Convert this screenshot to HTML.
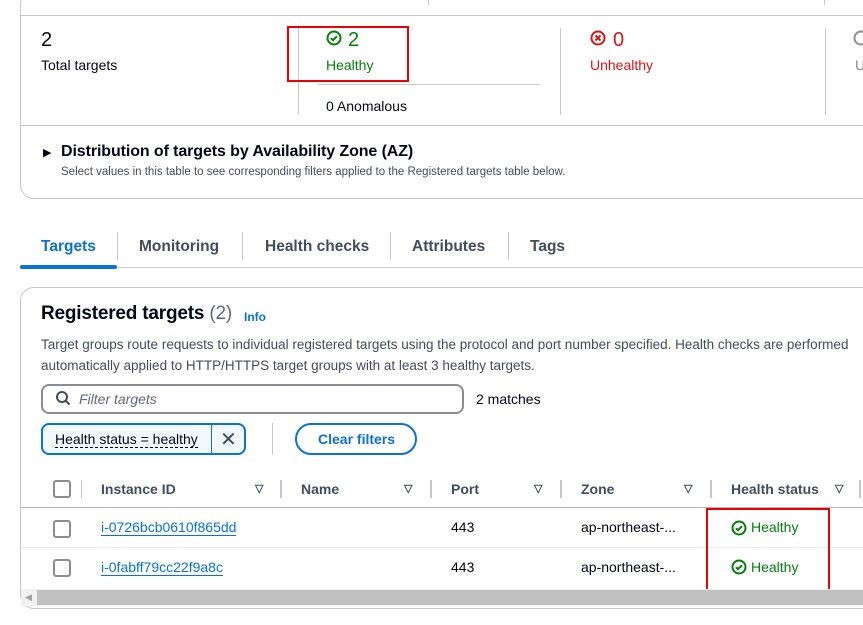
<!DOCTYPE html><html><head><style>
body{margin:0;width:863px;height:625px;overflow:hidden;background:#fff;font-family:"Liberation Sans",sans-serif;color:#000716;position:relative}
.a{position:absolute;white-space:nowrap}
.vl{position:absolute;width:1px;background:#c6c6cd}
.hl{position:absolute;height:1px;background:#c6c6cd}
.g{color:#037f0c}.r{color:#d91515}.b{color:#0972d3}
.cb{position:absolute;width:14px;height:14px;border:2px solid #8c8c94;border-radius:3px;left:53px}
.tri{position:absolute;font-size:11px;color:#414d5c;font-weight:bold}
</style></head><body>
<div style="position:absolute;left:20px;top:-10px;width:860px;height:207px;border:1px solid #c6c6cd;border-radius:14px"></div>
<div class="hl" style="left:20px;top:15px;width:843px"></div>
<div class="vl" style="left:428px;top:0;height:5px"></div>
<div class="vl" style="left:824px;top:0;height:5px"></div>
<div class="a" style="left:41px;top:29px;font-size:20px">2</div>
<div class="a" style="left:41px;top:57px;font-size:14px">Total targets</div>
<div class="vl" style="left:298px;top:28px;height:87px"></div>
<svg class="a" style="left:326px;top:30px" width="16" height="16" viewBox="0 0 16 16"><circle cx="8" cy="8" r="6.5" fill="none" stroke="#037f0c" stroke-width="2"/><path d="M5 8.2l2 2 4-4" fill="none" stroke="#037f0c" stroke-width="2"/></svg>
<div class="a g" style="left:348px;top:29px;font-size:20px">2</div>
<div class="a g" style="left:326px;top:57px;font-size:14px">Healthy</div>
<div class="hl" style="left:318px;top:84px;width:222px"></div>
<div class="a" style="left:326px;top:98px;font-size:14px">0 Anomalous</div>
<div class="vl" style="left:560px;top:28px;height:87px"></div>
<svg class="a" style="left:590px;top:30px" width="16" height="16" viewBox="0 0 16 16"><circle cx="8" cy="8" r="6.5" fill="none" stroke="#d91515" stroke-width="2"/><path d="M5.5 5.5l5 5M10.5 5.5l-5 5" stroke="#d91515" stroke-width="2"/></svg>
<div class="a r" style="left:613px;top:29px;font-size:20px">0</div>
<div class="a r" style="left:590px;top:57px;font-size:14px">Unhealthy</div>
<div class="vl" style="left:825px;top:28px;height:87px"></div>
<svg class="a" style="left:853px;top:30px" width="16" height="16"><circle cx="8" cy="8" r="6.5" fill="none" stroke="#8c8c94" stroke-width="2"/></svg>
<div class="a" style="left:855px;top:57px;font-size:14px;color:#8c8c94">U</div>
<div style="position:absolute;left:287px;top:26px;width:118px;height:52px;border:2px solid #e00"></div>
<div class="hl" style="left:20px;top:125px;width:843px"></div>
<div class="a" style="left:43px;top:146px;font-size:11px">&#9654;</div>
<div class="a" style="left:61px;top:143px;font-size:16px;font-weight:bold;letter-spacing:-0.1px">Distribution of targets by Availability Zone (AZ)</div>
<div class="a" style="left:61px;top:166px;font-size:11.5px;color:#414d5c">Select values in this table to see corresponding filters applied to the Registered targets table below.</div>
<div class="a b" style="left:41px;top:238px;font-size:15.5px;font-weight:bold">Targets</div>
<div class="a" style="left:139px;top:238px;font-size:15.5px;font-weight:bold;color:#414d5c">Monitoring</div>
<div class="a" style="left:265px;top:238px;font-size:15.5px;font-weight:bold;color:#414d5c">Health checks</div>
<div class="a" style="left:412px;top:238px;font-size:15.5px;font-weight:bold;color:#414d5c">Attributes</div>
<div class="a" style="left:530px;top:238px;font-size:15.5px;font-weight:bold;color:#414d5c">Tags</div>
<div class="vl" style="left:117px;top:232px;height:28px"></div>
<div class="vl" style="left:242px;top:232px;height:28px"></div>
<div class="vl" style="left:390px;top:232px;height:28px"></div>
<div class="vl" style="left:508px;top:232px;height:28px"></div>
<div class="hl" style="left:20px;top:267px;width:843px"></div>
<div style="position:absolute;left:20px;top:265px;width:97px;height:4px;background:#0972d3;border-radius:2px"></div>
<div style="position:absolute;left:20px;top:287px;width:860px;height:320px;border:1px solid #c6c6cd;border-radius:14px;overflow:hidden"></div>
<div class="a" style="left:41px;top:303px;font-size:19px;font-weight:bold;letter-spacing:-0.2px">Registered targets <span style="font-weight:normal;color:#5f6b7a">(2)</span></div>
<div class="a b" style="left:244px;top:310px;font-size:12px;font-weight:bold">Info</div>
<div class="a" style="left:41px;top:337px;font-size:13.5px;color:#414d5c">Target groups route requests to individual registered targets using the protocol and port number specified. Health checks are performed</div>
<div class="a" style="left:41px;top:358px;font-size:13.5px;color:#414d5c">automatically applied to HTTP/HTTPS target groups with at least 3 healthy targets.</div>
<div style="position:absolute;left:41px;top:384px;width:419px;height:26px;border:2px solid #8c8c94;border-radius:8px"></div>
<svg class="a" style="left:55px;top:390px" width="16" height="16"><circle cx="7" cy="7" r="5" fill="none" stroke="#414d5c" stroke-width="2"/><path d="M10.5 10.5l4 4" stroke="#414d5c" stroke-width="2"/></svg>
<div class="a" style="left:79px;top:391px;font-size:14px;font-style:italic;color:#5f6b7a">Filter targets</div>
<div class="a" style="left:476px;top:391px;font-size:14px">2 matches</div>
<div style="position:absolute;left:41px;top:423px;width:201px;height:28px;border:2px solid #0972d3;border-radius:8px;background:#f2f8fd"></div>
<div class="vl" style="left:211px;top:425px;height:28px;background:#0972d3"></div>
<div class="a" style="left:55px;top:431px;font-size:14px;border-bottom:1px dashed #000">Health status = healthy</div>
<div class="a" style="left:220px;top:427px;font-size:20px;color:#414d5c">&#x2715;</div>
<div class="vl" style="left:272px;top:423px;height:32px"></div>
<div style="position:absolute;left:295px;top:423px;width:118px;height:28px;border:2px solid #0972d3;border-radius:16px"></div>
<div class="a b" style="left:318px;top:431px;font-size:14px;font-weight:bold">Clear filters</div>
<div class="cb" style="top:480px"></div>
<div class="vl" style="left:81px;top:480px;height:18px"></div>
<div class="a" style="left:101px;top:481px;font-size:14px;font-weight:bold;color:#414d5c">Instance ID</div><div class="tri" style="left:255px;top:482px">&#9661;</div><div class="vl" style="left:280px;top:480px;height:18px;width:2px"></div>
<div class="a" style="left:301px;top:481px;font-size:14px;font-weight:bold;color:#414d5c">Name</div><div class="tri" style="left:404px;top:482px">&#9661;</div><div class="vl" style="left:430px;top:480px;height:18px;width:2px"></div>
<div class="a" style="left:451px;top:481px;font-size:14px;font-weight:bold;color:#414d5c">Port</div><div class="tri" style="left:534px;top:482px">&#9661;</div><div class="vl" style="left:560px;top:480px;height:18px;width:2px"></div>
<div class="a" style="left:581px;top:481px;font-size:14px;font-weight:bold;color:#414d5c">Zone</div><div class="tri" style="left:684px;top:482px">&#9661;</div><div class="vl" style="left:710px;top:480px;height:18px;width:2px"></div>
<div class="a" style="left:731px;top:481px;font-size:14px;font-weight:bold;color:#414d5c">Health status</div><div class="tri" style="left:835px;top:482px">&#9661;</div><div class="vl" style="left:859px;top:480px;height:18px;width:2px"></div>
<div class="hl" style="left:21px;top:507px;width:842px;background:#b4b4bb"></div>
<div class="cb" style="top:520px"></div>
<div class="a b" style="left:101px;top:519px;font-size:14px;border-bottom:1px solid #0972d3">i-0726bcb0610f865dd</div>
<div class="a" style="left:451px;top:519px;font-size:14px">443</div>
<div class="a" style="left:581px;top:519px;font-size:14px">ap-northeast-...</div>
<svg class="a" style="left:731px;top:520px" width="16" height="16" viewBox="0 0 16 16"><circle cx="8" cy="8" r="6.5" fill="none" stroke="#037f0c" stroke-width="2"/><path d="M5 8.2l2 2 4-4" fill="none" stroke="#037f0c" stroke-width="2"/></svg>
<div class="a g" style="left:751px;top:519px;font-size:14px">Healthy</div>
<div class="hl" style="left:21px;top:547px;width:842px;background:#e9ebed"></div>
<div class="cb" style="top:559px"></div>
<div class="a b" style="left:101px;top:559px;font-size:14px;border-bottom:1px solid #0972d3">i-0fabff79cc22f9a8c</div>
<div class="a" style="left:451px;top:559px;font-size:14px">443</div>
<div class="a" style="left:581px;top:559px;font-size:14px">ap-northeast-...</div>
<svg class="a" style="left:731px;top:559px" width="16" height="16" viewBox="0 0 16 16"><circle cx="8" cy="8" r="6.5" fill="none" stroke="#037f0c" stroke-width="2"/><path d="M5 8.2l2 2 4-4" fill="none" stroke="#037f0c" stroke-width="2"/></svg>
<div class="a g" style="left:751px;top:559px;font-size:14px">Healthy</div>
<div style="position:absolute;left:706px;top:508px;width:120px;height:79px;border:2px solid #e00"></div>
<div style="position:absolute;left:21px;top:589px;width:842px;height:17px;background:#f1f1f1"></div>
<div style="position:absolute;left:37px;top:590px;width:826px;height:15px;background:#c1c1c1"></div>
<div class="a" style="left:25px;top:592px;font-size:9px;color:#a0a0a0">&#9664;</div>
</body></html>
